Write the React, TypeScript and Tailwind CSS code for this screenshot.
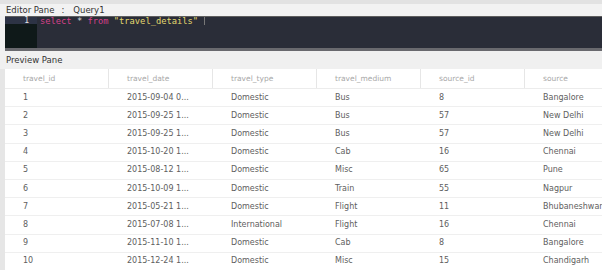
import React from "react";

const rows = [
  ["1", "2015-09-04 0...", "Domestic", "Bus", "8", "Bangalore"],
  ["2", "2015-09-25 1...", "Domestic", "Bus", "57", "New Delhi"],
  ["3", "2015-09-25 1...", "Domestic", "Bus", "57", "New Delhi"],
  ["4", "2015-10-20 1...", "Domestic", "Cab", "16", "Chennai"],
  ["5", "2015-08-12 1...", "Domestic", "Misc", "65", "Pune"],
  ["6", "2015-10-09 1...", "Domestic", "Train", "55", "Nagpur"],
  ["7", "2015-05-21 1...", "Domestic", "Flight", "11", "Bhubaneshwar"],
  ["8", "2015-07-08 1...", "International", "Flight", "16", "Chennai"],
  ["9", "2015-11-10 1...", "Domestic", "Cab", "8", "Bangalore"],
  ["10", "2015-12-24 1...", "Domestic", "Misc", "15", "Chandigarh"],
];

const headers = ["travel_id", "travel_date", "travel_type", "travel_medium", "source_id", "source"];

export default function App() {
  const font = { fontFamily: '"DejaVu Sans", sans-serif' };
  return (
    <div className="w-[602px] h-[270px] overflow-hidden bg-[#f0f0f0] flex flex-col" style={font}>
      <div className="h-[4px] bg-[#e2e2e2] shrink-0" />
      <div className="h-[12px] shrink-0 flex items-center pl-[6px] text-[8.5px] text-[#333] bg-[#f2f2f2]">
        <span>Editor Pane</span>
        <span className="ml-[7px]">:</span>
        <span className="ml-[9px]">Query1</span>
      </div>
      <div className="ml-[5px] h-[35px] shrink-0 bg-[#2a2d38] border-t border-[#5e5e5e] border-b-[3px] border-b-[#69696e] flex">
        <div className="w-[32px] bg-[#0f1919] shrink-0">
          <div className="h-[7px] bg-[#2d3345] text-[#e8e8e8] text-[8px] leading-[7px] text-right pr-[8px]" style={{ fontFamily: '"DejaVu Sans Mono", monospace' }}>
            1
          </div>
        </div>
        <div className="pl-[3px] text-[8.75px] leading-[8px] whitespace-pre flex items-start" style={{ fontFamily: '"DejaVu Sans Mono", monospace' }}>
          <span className="text-[#d6408a]">select</span>
          <span className="text-[#dddddd]"> * </span>
          <span className="text-[#d6408a]">from</span>
          <span className="text-[#dddddd]"> </span>
          <span className="text-[#e4d96f]">"travel_details"</span>
          <span className="ml-[6px] w-px h-[8px] bg-[#777]" />
        </div>
      </div>
      <div className="h-[18px] shrink-0 flex items-center pl-[6px] text-[8.5px] text-[#333] bg-[#f0f0f0]">
        Preview Pane
      </div>
      <div className="flex-1 flex">
        <div className="w-[5px] bg-[#e6e6e6] shrink-0" />
        <div className="flex-1 bg-white overflow-hidden">
          <div className="flex h-[20px] border-b border-[#ececec]">
            {headers.map((h, i) => (
              <div
                key={h}
                className={`w-[104px] shrink-0 flex items-center pl-[18px] text-[7.5px] text-[#a8a8a8] ${i < 5 ? "border-r border-[#e6e6e6]" : ""}`}
              >
                {h}
              </div>
            ))}
          </div>
          {rows.map((r, ri) => (
            <div key={ri} className="flex h-[18.2px] border-b border-[#efefef]">
              {r.map((c, ci) => (
                <div
                  key={ci}
                  className="w-[104px] shrink-0 flex items-center pl-[18px] text-[8px] text-[#5e5e5e] whitespace-nowrap"
                >
                  {c}
                </div>
              ))}
            </div>
          ))}
        </div>
      </div>
    </div>
  );
}
